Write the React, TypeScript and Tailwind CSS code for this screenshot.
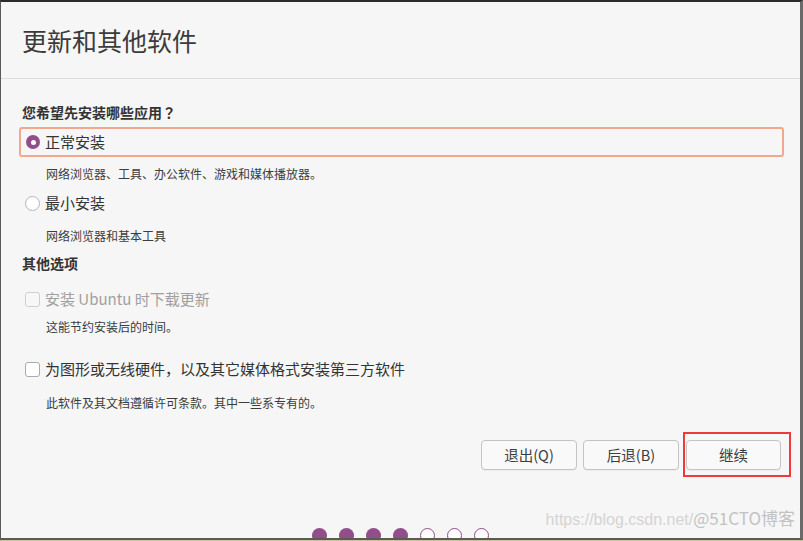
const font = { fontFamily: '"Noto Sans CJK SC", "Noto Sans", sans-serif' }

const Radio = ({ checked }: { checked?: boolean }) =>
  checked ? (
    <span className="flex h-[14px] w-[14px] items-center justify-center rounded-full bg-[#924d8b]">
      <span className="h-[5px] w-[5px] rounded-full bg-white" />
    </span>
  ) : (
    <span className="block h-[15px] w-[15px] rounded-full border border-[#b4b4b4] bg-white" />
  )

const Check = ({ disabled }: { disabled?: boolean }) => (
  <span
    className={
      disabled
        ? "block h-[15px] w-[15px] rounded-[3px] border border-[#cfcfcf] bg-[#f7f7f7]"
        : "block h-[15px] w-[15px] rounded-[3px] border border-[#ababab] bg-white"
    }
  />
)

const Desc = ({ children, mt }: { children: string; mt: string }) => (
  <p className={`${mt} pl-[24px] text-[12px] leading-[16px] text-[#3c3c3c]`}>{children}</p>
)

const Btn = ({ label, w }: { label: string; w: string }) => (
  <button className={`${w} h-[30px] rounded-[4px] border border-[#c4c4c4] bg-[#f9f9f9] text-[14.5px] text-[#3c3c3c] shadow-[0_1px_0_rgba(0,0,0,0.04)]`}>
    {label}
  </button>
)

export default function App() {
  const dots = [true, true, true, true, false, false, false]
  return (
    <div className="h-[541px] w-[803px] bg-[#c9c49c]" style={font}>
      <div className="relative flex h-[540px] flex-col overflow-hidden border-t-2 border-b-2 border-l border-r-[3px] border-t-[#2b2b2b] border-b-[#5b5b52] border-l-[#5a5a5a] border-r-[#6a6a6a] bg-[#f6f6f6]">
        <div className="flex h-[77px] shrink-0 items-center border-b border-[#dcdcdc] pl-[21px]">
          <h1 className="text-[25px] leading-[30px] text-[#3b3b3b]">更新和其他软件</h1>
        </div>

        <div className="flex flex-col pl-[21px] pr-[19px]">
          <h2 className="mt-[23px] text-[14px] font-bold leading-[20px] text-[#333]">
            您希望先安装哪些应用<span style={{ fontFamily: '"Noto Sans CJK JP", sans-serif' }}>？</span>
          </h2>

          <div className="ml-[-3px] mr-[-3px] mt-[5px] flex h-[30px] items-center gap-[5px] rounded-[3px] border-2 border-[#f2a88c] pl-[5px]">
            <Radio checked />
            <span className="text-[15px] leading-[20px] text-[#333]">正常安装</span>
          </div>
          <Desc mt="mt-[9px]">网络浏览器、工具、办公软件、游戏和媒体播放器。</Desc>

          <label className="mt-[11px] flex h-[20px] items-center gap-[5px] pl-[3px]">
            <Radio />
            <span className="text-[15px] leading-[20px] text-[#333]">最小安装</span>
          </label>
          <Desc mt="mt-[15px]">网络浏览器和基本工具</Desc>

          <h2 className="mt-[9px] text-[14px] font-bold leading-[20px] text-[#333]">其他选项</h2>

          <label className="mt-[16px] flex h-[20px] items-center gap-[5px] pl-[3px]">
            <Check disabled />
            <span className="text-[15px] leading-[20px] text-[#a0a0a0]">安装 Ubuntu 时下载更新</span>
          </label>
          <Desc mt="mt-[10px]">这能节约安装后的时间。</Desc>

          <label className="mt-[24px] flex h-[20px] items-center gap-[5px] pl-[3px]">
            <Check />
            <span className="text-[15px] leading-[20px] text-[#333]">为图形或无线硬件，以及其它媒体格式安装第三方软件</span>
          </label>
          <Desc mt="mt-[16px]">此软件及其文档遵循许可条款。其中一些系专有的。</Desc>

          <div className="mt-[29px] flex justify-end">
            <Btn label="退出(Q)" w="w-[96px]" />
            <div className="ml-[6px]">
              <Btn label="后退(B)" w="w-[96px]" />
            </div>
            <div className="relative ml-[7px]">
              <Btn label="继续" w="w-[95px]" />
              <span className="absolute bottom-[-7px] left-[-3px] right-[-10px] top-[-8px] border-2 border-[#ee3a3a]" />
            </div>
          </div>
        </div>

        <div className="mt-[58px] flex justify-center gap-[12px]">
          {dots.map((on, i) => (
            <span
              key={i}
              className={
                on
                  ? "block h-[15px] w-[15px] shrink-0 rounded-full bg-[#924d8b]"
                  : "block h-[15px] w-[15px] shrink-0 rounded-full border border-[#924d8b] bg-white"
              }
            />
          ))}
        </div>

        <div className="pointer-events-none absolute bottom-[8px] right-[5px] flex items-baseline whitespace-nowrap leading-[20px]">
          <span className="text-[16px] text-[#d4d4d4]" style={{ fontFamily: '"Liberation Sans", sans-serif' }}>
            https://blog.csdn.net/
          </span>
          <span className="text-[17px] text-[#c2c2c2]">@51CTO博客</span>
        </div>
      </div>
    </div>
  )
}
